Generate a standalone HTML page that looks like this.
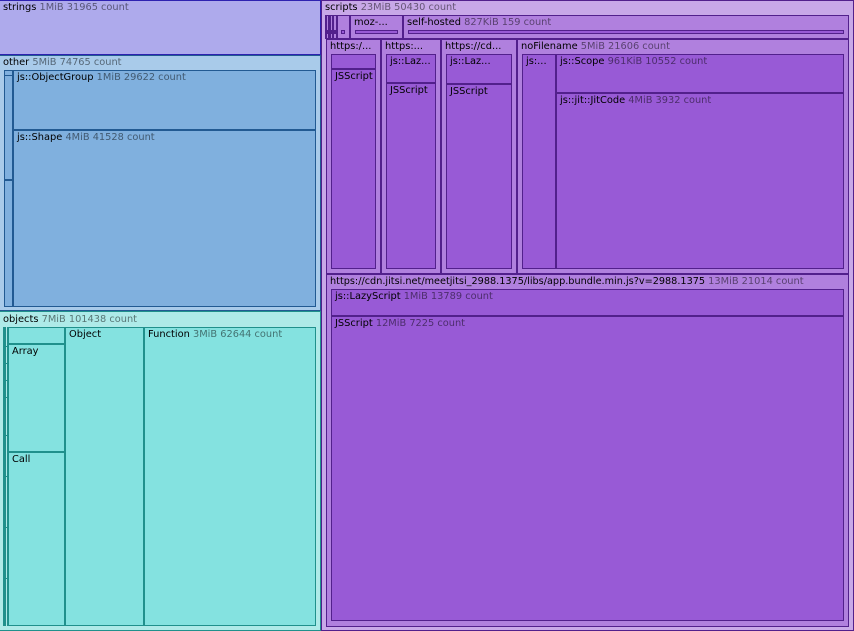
<!DOCTYPE html>
<html><head><meta charset="utf-8"><style>
html,body{margin:0;padding:0;background:#fff}
#r{position:relative;width:854px;height:631px;overflow:hidden;font:9.85px/12px "DejaVu Sans",sans-serif;color:#000}
#r div{position:absolute;box-sizing:border-box;border:1px solid;white-space:nowrap;overflow:hidden}
#r u{position:absolute;display:block;text-decoration:none}
#r b{position:absolute;font-weight:normal;white-space:nowrap;line-height:12px}
#r i{font-style:normal;opacity:.5;font-size:9.8px}
.s{background:#aeaaec;border-color:#2e22b0!important}
.o1{background:#a9cbea;border-color:#225a92!important}
.o2{background:#80b0de;border-color:#225a92!important}
.t1{background:#aeeae8;border-color:#20908c!important}
.t2{background:#84e2e0;border-color:#20908c!important}
.p1{background:#c8a8e8;border-color:#52208c!important}
.p2{background:#b080de;border-color:#52208c!important}
.p3{background:#985ad6;border-color:#52208c!important}
.td{background:#20908c}
.pd{background:#52208c}
</style></head><body><div id="r">
<div class="s" style="left:-1px;top:0;width:322px;height:55px"></div>
<b style="left:3px;top:2px">strings <i>1MiB 31965 count</i></b>

<div class="o1" style="left:-1px;top:55px;width:322px;height:256px"></div>
<b style="left:3px;top:57px">other <i>5MiB 74765 count</i></b>
<div class="o2" style="left:4px;top:70px;width:9px;height:6px"></div>
<div class="o2" style="left:4px;top:75px;width:9px;height:105px"></div>
<div class="o2" style="left:4px;top:180px;width:9px;height:127px"></div>
<div class="o2" style="left:13px;top:70px;width:303px;height:60px"></div>
<div class="o2" style="left:13px;top:130px;width:303px;height:177px"></div>
<b style="left:17px;top:72px">js::ObjectGroup <i>1MiB 29622 count</i></b>
<b style="left:17px;top:132px">js::Shape <i>4MiB 41528 count</i></b>

<div class="t1" style="left:-1px;top:311px;width:322px;height:320px"></div>
<b style="left:3px;top:314px">objects <i>7MiB 101438 count</i></b>
<u class="td" style="left:3px;top:327px;width:3px;height:299px"></u>
<u class="td" style="left:7px;top:327px;width:2px;height:299px"></u>
<u class="td" style="left:6px;top:346px;width:1px;height:1px"></u>
<u class="td" style="left:6px;top:363px;width:1px;height:1px"></u>
<u class="td" style="left:6px;top:380px;width:1px;height:1px"></u>
<u class="td" style="left:6px;top:397px;width:1px;height:1px"></u>
<u class="td" style="left:6px;top:435px;width:1px;height:1px"></u>
<u class="td" style="left:6px;top:476px;width:1px;height:1px"></u>
<u class="td" style="left:6px;top:527px;width:1px;height:1px"></u>
<u class="td" style="left:6px;top:578px;width:1px;height:1px"></u>
<div class="t2" style="left:8px;top:327px;width:57px;height:17px"></div>
<div class="t2" style="left:8px;top:344px;width:57px;height:108px"></div>
<div class="t2" style="left:8px;top:452px;width:57px;height:174px"></div>
<div class="t2" style="left:65px;top:327px;width:79px;height:299px"></div>
<div class="t2" style="left:144px;top:327px;width:172px;height:299px"></div>
<b style="left:12px;top:346px">Array</b>
<b style="left:12px;top:454px">Call</b>
<b style="left:69px;top:329px">Object</b>
<b style="left:148px;top:329px">Function <i>3MiB 62644 count</i></b>

<div class="p1" style="left:321px;top:0;width:533px;height:631px"></div>
<b style="left:325px;top:2px">scripts <i>23MiB 50430 count</i></b>
<div class="p2" style="left:325px;top:15px;width:25px;height:24px"></div>
<u class="pd" style="left:325px;top:15px;width:2px;height:24px"></u>
<u class="pd" style="left:328px;top:15px;width:3px;height:24px"></u>
<u class="pd" style="left:332px;top:15px;width:2px;height:24px"></u>
<u class="pd" style="left:336px;top:15px;width:2px;height:24px"></u>
<u class="pd" style="left:325px;top:30px;width:12px;height:4px"></u>
<div class="p3" style="left:341px;top:30px;width:4px;height:4px"></div>
<div class="p2" style="left:350px;top:15px;width:53px;height:24px"></div>
<div class="p3" style="left:355px;top:30px;width:43px;height:4px"></div>
<div class="p2" style="left:403px;top:15px;width:446px;height:24px"></div>
<div class="p3" style="left:408px;top:30px;width:436px;height:4px"></div>
<b style="left:354px;top:17px">moz-...</b>
<b style="left:407px;top:17px">self-hosted <i>827KiB 159 count</i></b>

<div class="p2" style="left:326px;top:39px;width:55px;height:235px"></div>
<div class="p2" style="left:381px;top:39px;width:60px;height:235px"></div>
<div class="p2" style="left:441px;top:39px;width:76px;height:235px"></div>
<div class="p2" style="left:517px;top:39px;width:332px;height:235px"></div>
<b style="left:330px;top:41px">https:/...</b>
<b style="left:385px;top:41px">https:...</b>
<b style="left:445px;top:41px">https://cd...</b>
<b style="left:521px;top:41px">noFilename <i>5MiB 21606 count</i></b>

<div class="p3" style="left:331px;top:54px;width:45px;height:15px"></div>
<div class="p3" style="left:331px;top:69px;width:45px;height:200px"></div>
<b style="left:335px;top:71px">JSScript</b>
<div class="p3" style="left:386px;top:54px;width:50px;height:29px"></div>
<div class="p3" style="left:386px;top:83px;width:50px;height:186px"></div>
<b style="left:390px;top:56px">js::Laz...</b>
<b style="left:390px;top:85px">JSScript</b>
<div class="p3" style="left:446px;top:54px;width:66px;height:30px"></div>
<div class="p3" style="left:446px;top:84px;width:66px;height:185px"></div>
<b style="left:450px;top:56px">js::Laz...</b>
<b style="left:450px;top:86px">JSScript</b>
<div class="p3" style="left:522px;top:54px;width:34px;height:215px"></div>
<b style="left:526px;top:56px">js:...</b>
<div class="p3" style="left:556px;top:54px;width:288px;height:39px"></div>
<div class="p3" style="left:556px;top:93px;width:288px;height:176px"></div>
<b style="left:560px;top:56px">js::Scope <i>961KiB 10552 count</i></b>
<b style="left:560px;top:95px">js::jit::JitCode <i>4MiB 3932 count</i></b>

<div class="p2" style="left:326px;top:274px;width:523px;height:353px"></div>
<b style="left:330px;top:276px;font-size:9.7px">https://cdn.jitsi.net/meetjitsi_2988.1375/libs/app.bundle.min.js?v=2988.1375 <i>13MiB 21014 count</i></b>
<div class="p3" style="left:331px;top:289px;width:513px;height:27px"></div>
<div class="p3" style="left:331px;top:316px;width:513px;height:305px"></div>
<b style="left:335px;top:291px">js::LazyScript <i>1MiB 13789 count</i></b>
<b style="left:335px;top:318px">JSScript <i>12MiB 7225 count</i></b>
</div></body></html>
